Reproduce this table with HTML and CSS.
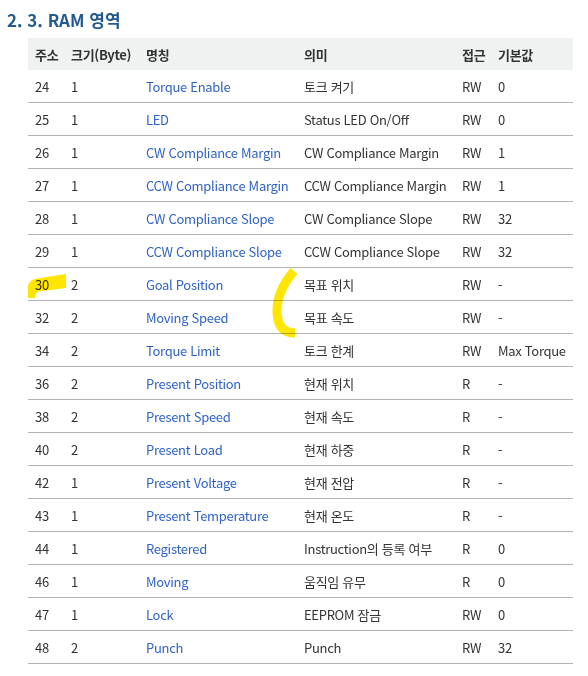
FILE: index.html
```html
<!DOCTYPE html>
<html lang="ko">
<head>
<meta charset="utf-8">
<link rel="stylesheet" href="styles.css">
</head>
<body>
<div class="page">
  <h2 class="title">2. 3. RAM 영역</h2>
  <table class="ram">
    <colgroup>
      <col class="c-addr"><col class="c-size"><col class="c-name"><col class="c-desc"><col class="c-acc"><col class="c-def">
    </colgroup>
    <thead>
      <tr><th>주소</th><th>크기(Byte)</th><th>명칭</th><th>의미</th><th>접근</th><th>기본값</th></tr>
    </thead>
    <tbody>
      <tr><td>24</td><td>1</td><td class="link">Torque Enable</td><td>토크 켜기</td><td>RW</td><td>0</td></tr>
      <tr><td>25</td><td>1</td><td class="link">LED</td><td>Status LED On/Off</td><td>RW</td><td>0</td></tr>
      <tr><td>26</td><td>1</td><td class="link">CW Compliance Margin</td><td>CW Compliance Margin</td><td>RW</td><td>1</td></tr>
      <tr><td>27</td><td>1</td><td class="link">CCW Compliance Margin</td><td>CCW Compliance Margin</td><td>RW</td><td>1</td></tr>
      <tr><td>28</td><td>1</td><td class="link">CW Compliance Slope</td><td>CW Compliance Slope</td><td>RW</td><td>32</td></tr>
      <tr><td>29</td><td>1</td><td class="link">CCW Compliance Slope</td><td>CCW Compliance Slope</td><td>RW</td><td>32</td></tr>
      <tr><td>30</td><td>2</td><td class="link">Goal Position</td><td>목표 위치</td><td>RW</td><td>-</td></tr>
      <tr><td>32</td><td>2</td><td class="link">Moving Speed</td><td>목표 속도</td><td>RW</td><td>-</td></tr>
      <tr><td>34</td><td>2</td><td class="link">Torque Limit</td><td>토크 한계</td><td>RW</td><td>Max Torque</td></tr>
      <tr><td>36</td><td>2</td><td class="link">Present Position</td><td>현재 위치</td><td>R</td><td>-</td></tr>
      <tr><td>38</td><td>2</td><td class="link">Present Speed</td><td>현재 속도</td><td>R</td><td>-</td></tr>
      <tr><td>40</td><td>2</td><td class="link">Present Load</td><td>현재 하중</td><td>R</td><td>-</td></tr>
      <tr><td>42</td><td>1</td><td class="link">Present Voltage</td><td>현재 전압</td><td>R</td><td>-</td></tr>
      <tr><td>43</td><td>1</td><td class="link">Present Temperature</td><td>현재 온도</td><td>R</td><td>-</td></tr>
      <tr><td>44</td><td>1</td><td class="link">Registered</td><td>Instruction의 등록 여부</td><td>R</td><td>0</td></tr>
      <tr><td>46</td><td>1</td><td class="link">Moving</td><td>움직임 유무</td><td>R</td><td>0</td></tr>
      <tr><td>47</td><td>1</td><td class="link">Lock</td><td>EEPROM 잠금</td><td>RW</td><td>0</td></tr>
      <tr><td>48</td><td>2</td><td class="link">Punch</td><td>Punch</td><td>RW</td><td>32</td></tr>
    </tbody>
  </table>
  <svg class="marks" width="588" height="676" viewBox="0 0 588 676" aria-hidden="true">
    <path d="M28,298 L28,286 Q29,279 40,278 L66,274 L66,288 L42,291 Q35,291 35,298 Z" fill="#ffe600"/>
    <path d="M294,271 Q276,292 277,313 Q278,333 295,333" fill="none" stroke="#ffe600" stroke-width="9"/>
  </svg>
</div>
</body>
</html>
```
FILE: styles.css
```css
html, body {
  margin: 0;
  padding: 0;
  background: #fff;
}
body {
  font-family: "Noto Sans CJK KR", "Noto Sans", sans-serif;
  color: #333;
}
.page {
  position: relative;
  width: 588px;
  height: 676px;
  overflow: hidden;
}
.title {
  margin: 0;
  padding: 8px 0 0 7px;
  font-size: 17px;
  line-height: 24px;
  font-weight: 700;
  color: #245b8f;
}
.ram {
  margin: 6px 0 0 28px;
  width: 545px;
  border-collapse: collapse;
  table-layout: fixed;
  font-size: 13px;
  letter-spacing: -0.3px;
}
.c-addr { width: 36px; }
.c-size { width: 75px; }
.c-name { width: 158px; }
.c-desc { width: 158px; }
.c-acc { width: 36px; }
.c-def { width: 82px; }
.ram th {
  background: #f0f2f2;
  height: 32px;
  padding: 0 0 0 7px;
  text-align: left;
  font-weight: 700;
  white-space: nowrap;
  color: #333;
}
.ram td {
  height: 31px;
  padding: 1px 0 0 7px;
  border-bottom: 1px solid #b2b2b2;
  white-space: nowrap;
  line-height: 20px;
}
.ram td.link {
  color: #2f63c6;
}
.marks {
  position: absolute;
  left: 0;
  top: 0;
  pointer-events: none;
  mix-blend-mode: multiply;
}
```
